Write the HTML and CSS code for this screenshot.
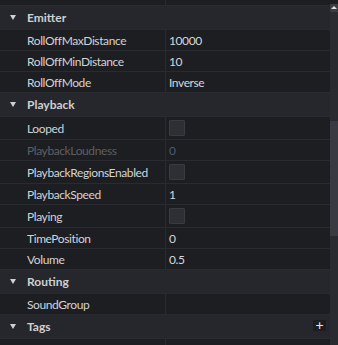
FILE: index.html
```html
<!DOCTYPE html>
<html lang="en">
<head>
  <meta charset="UTF-8">
  <title>Properties</title>
  <link rel="stylesheet" href="styles.css">
</head>
<body>
<div class="panel">
  <div class="props">
    <div class="row stub"><div class="name"></div><div class="value"></div></div>

    <div class="group"><span class="arrow"></span>Emitter</div>
    <div class="row"><div class="name">RollOffMaxDistance</div><div class="value">10000</div></div>
    <div class="row"><div class="name">RollOffMinDistance</div><div class="value">10</div></div>
    <div class="row"><div class="name">RollOffMode</div><div class="value">Inverse</div></div>

    <div class="group"><span class="arrow"></span>Playback</div>
    <div class="row tall"><div class="name">Looped</div><div class="value"><span class="check"></span></div></div>
    <div class="row disabled"><div class="name">PlaybackLoudness</div><div class="value">0</div></div>
    <div class="row tall"><div class="name">PlaybackRegionsEnabled</div><div class="value"><span class="check"></span></div></div>
    <div class="row"><div class="name">PlaybackSpeed</div><div class="value">1</div></div>
    <div class="row tall"><div class="name">Playing</div><div class="value"><span class="check"></span></div></div>
    <div class="row"><div class="name">TimePosition</div><div class="value">0</div></div>
    <div class="row"><div class="name">Volume</div><div class="value">0.5</div></div>

    <div class="group"><span class="arrow"></span>Routing</div>
    <div class="row"><div class="name">SoundGroup</div><div class="value"></div></div>

    <div class="group"><span class="arrow"></span>Tags<span class="add">+</span></div>
    <div class="row"><div class="name"></div><div class="value"></div></div>
  </div>

  <div class="scrollbar">
    <div class="sb-gap"></div>
    <div class="sb-up"><span class="sb-tri"></span></div>
    <div class="sb-track"></div>
    <div class="sb-thumb"></div>
    <div class="sb-track"></div>
  </div>
</div>
</body>
</html>
```

FILE: styles.css
```css
body {
  margin: 0;
  background-color: #1d1e22;
  font-family: Lato, "Noto Sans", sans-serif;
  font-size: 12px;
  letter-spacing: -0.4px;
  color: #d2d3d7;
}
.panel {
  display: flex;
  width: 338px;
  height: 345px;
  overflow: hidden;
}
.props {
  width: 330px;
  flex: none;
}
.row {
  display: flex;
  height: 20px;
  border-bottom: 1px solid #2a2b30;
  background-color: #1d1e22;
}
.row.tall {
  height: 22px;
}
.row.stub {
  height: 5px;
}
.name {
  width: 166px;
  flex: none;
  box-sizing: border-box;
  padding-left: 27px;
  border-right: 1px solid #2a2b30;
  display: flex;
  align-items: center;
  white-space: nowrap;
}
.value {
  flex: 1;
  padding-left: 3px;
  display: flex;
  align-items: center;
  color: #d6d7da;
}
.disabled .name {
  color: #5d5e64;
}
.disabled .value {
  color: #4f5b74;
}
.check {
  width: 14px;
  height: 14px;
  background-color: #2e2f35;
  border: 1px solid #3a3b41;
  border-radius: 1px;
}
.group {
  position: relative;
  display: flex;
  align-items: center;
  height: 23px;
  border-bottom: 1px solid #2a2b30;
  background-color: #26272c;
  font-weight: bold;
  letter-spacing: 0;
  color: #cfd0d3;
}
.arrow {
  width: 0;
  height: 0;
  margin: 0 11px 0 10px;
  border-left: 3.5px solid transparent;
  border-right: 3.5px solid transparent;
  border-top: 5px solid #cfd0d3;
}
.add {
  position: absolute;
  right: 4px;
  top: 5px;
  width: 13px;
  height: 11px;
  background-color: #1c1d21;
  color: #e8e8ea;
  font-weight: normal;
  font-size: 14px;
  line-height: 10px;
  text-align: center;
}
.scrollbar {
  width: 8px;
  flex: none;
  display: flex;
  flex-direction: column;
}
.sb-gap {
  height: 5px;
  background-color: #1d1e22;
}
.sb-up {
  height: 12px;
  background-color: #3c3d43;
  display: flex;
  justify-content: center;
  align-items: center;
}
.sb-tri {
  width: 0;
  height: 0;
  border-left: 3px solid transparent;
  border-right: 3px solid transparent;
  border-bottom: 3px solid #e0e0e2;
}
.sb-track {
  height: 151px;
  background-color: #2a2b31;
}
.sb-thumb {
  height: 161px;
  background-color: #3a3b42;
}
```
